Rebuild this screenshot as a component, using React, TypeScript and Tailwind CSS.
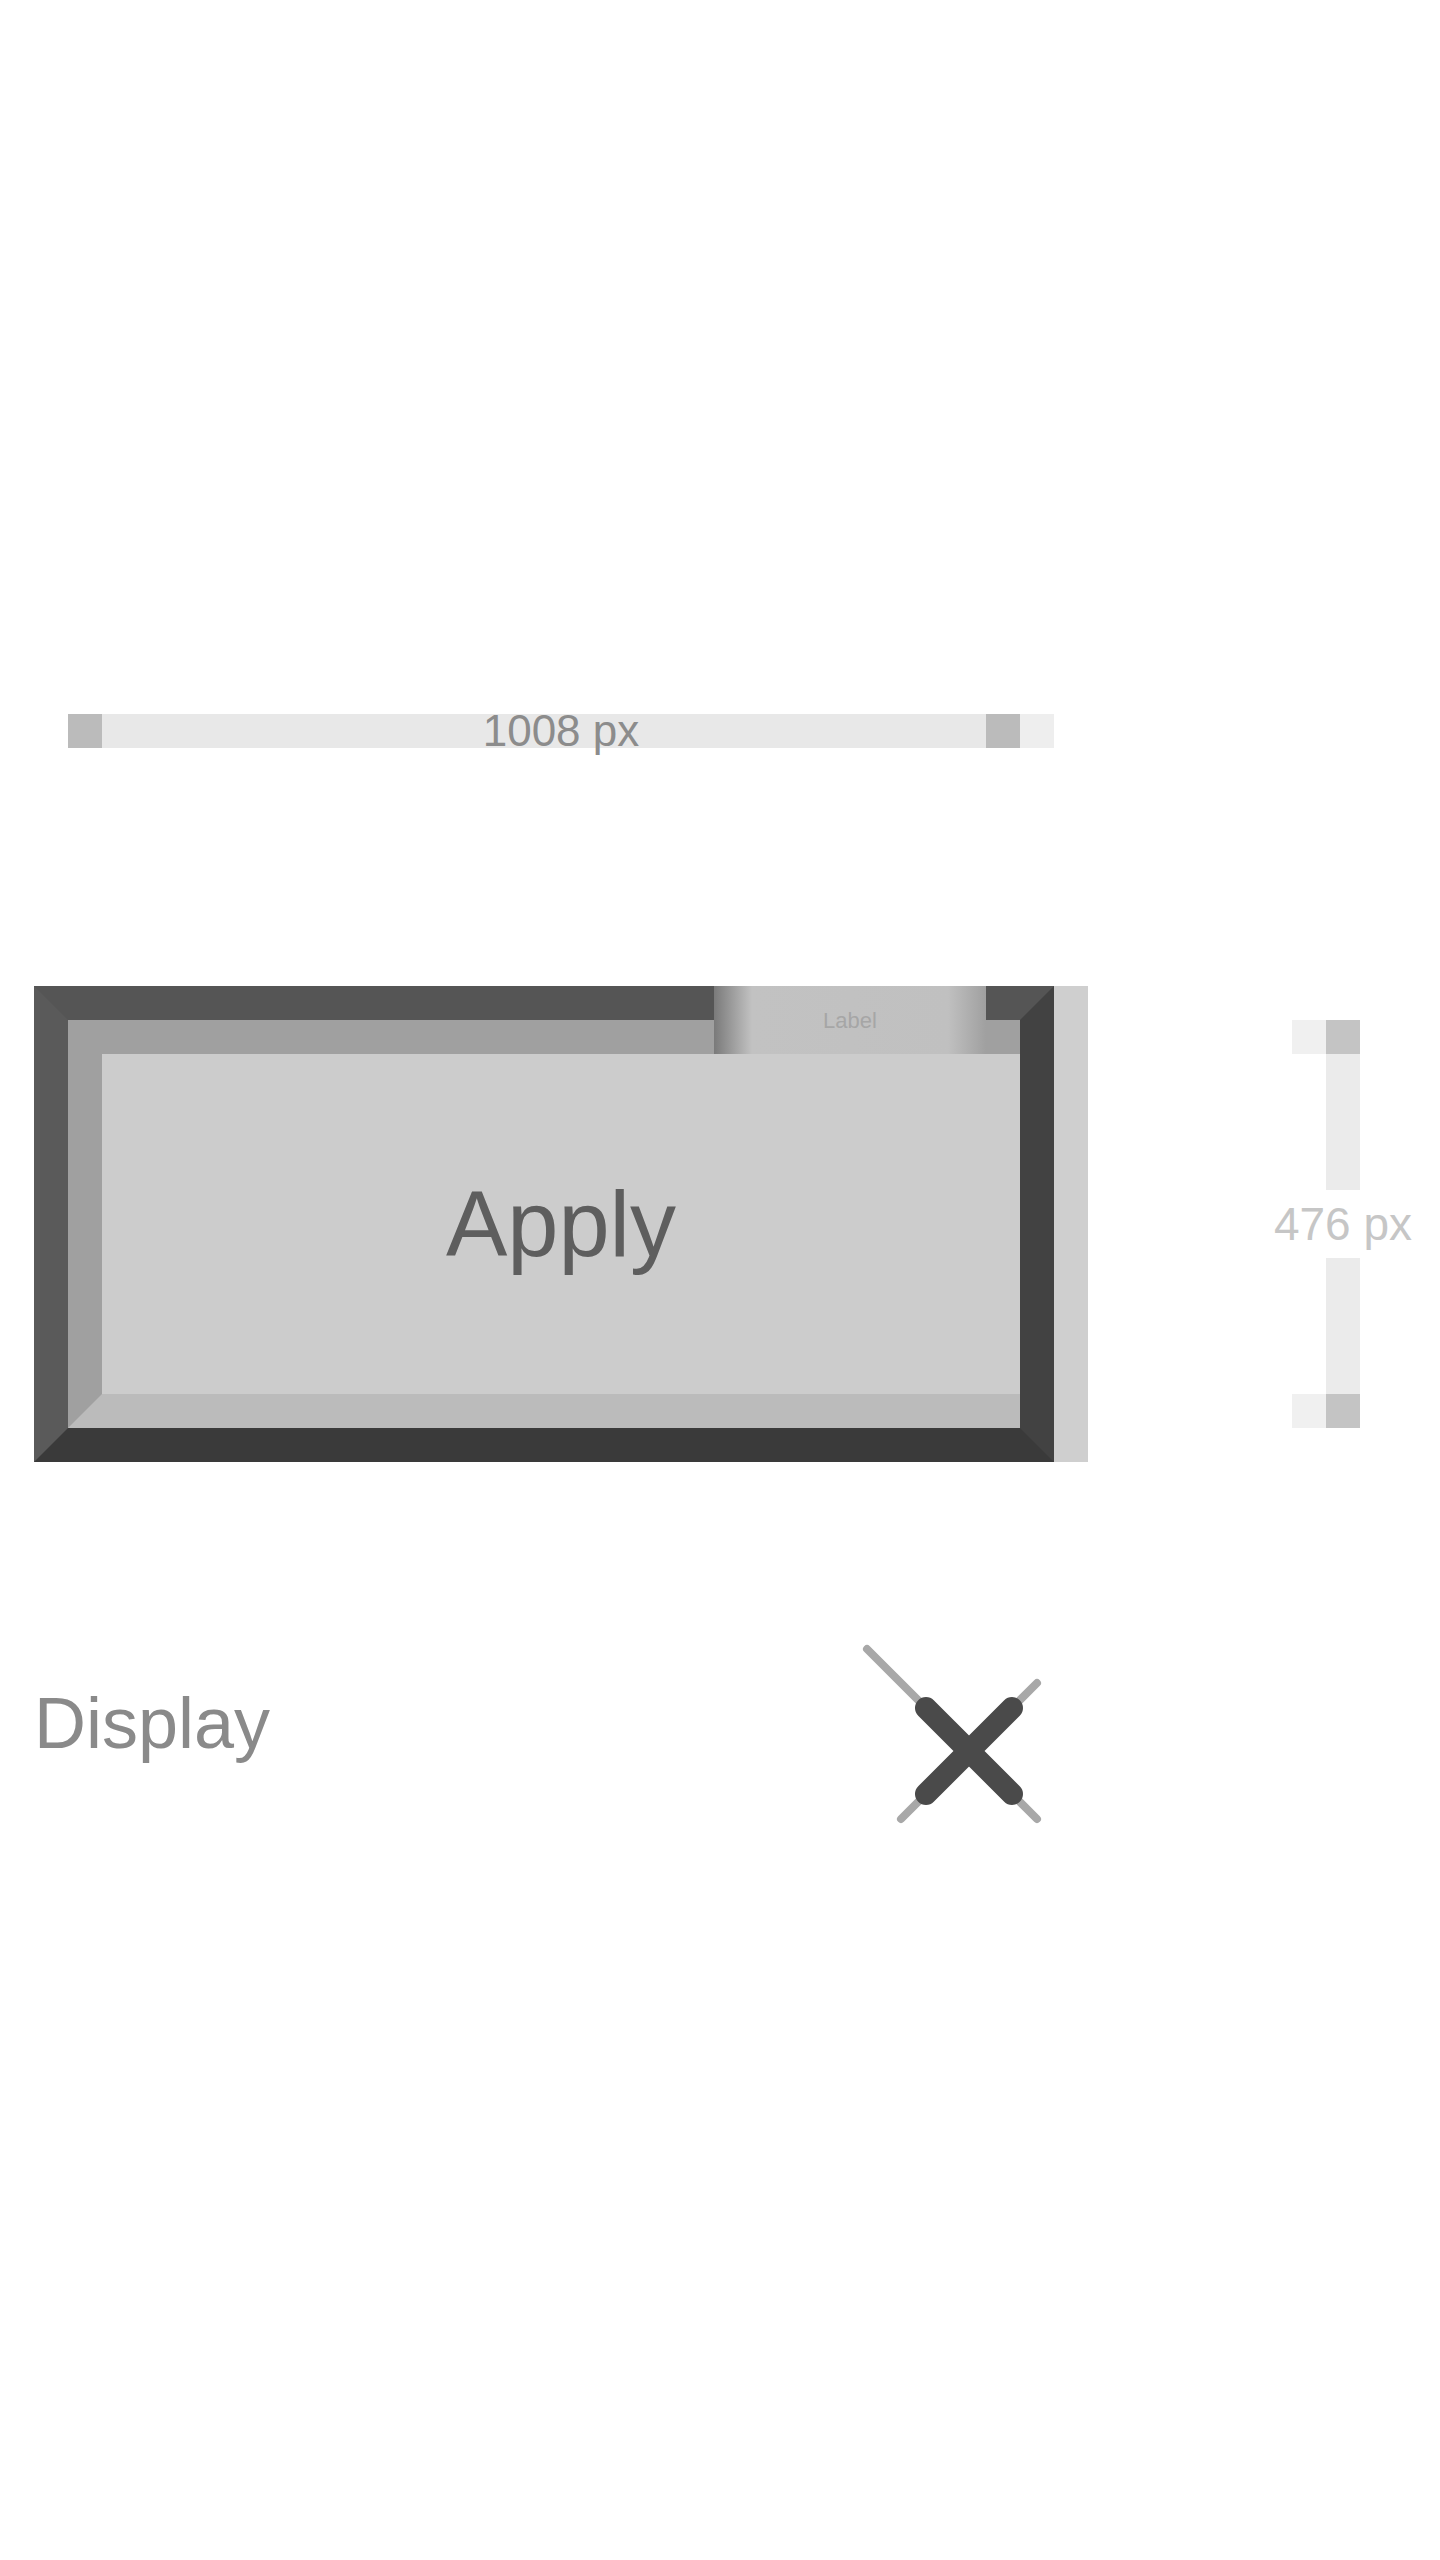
// Sizing sketch: a bevelled field with width / height rulers
function WidthRuler() {
  return (
    <div className="ml-[68px] flex h-[34px] w-[986px]">
      <span className="w-[34px] bg-[#bbbbbb]" />
      <span className="w-[374px] bg-[#e8e8e8]" />
      <span className="w-[170px] whitespace-nowrap bg-[#e8e8e8] text-center text-[44px] leading-[34px] text-[#8c8c8c]">
        1008 px
      </span>
      <span className="flex-1 bg-[#e8e8e8]" />
      <span className="w-[34px] bg-[#bbbbbb]" />
      <span className="w-[34px] bg-[#eeeeee]" />
    </div>
  )
}

function Tick() {
  return (
    <span className="mr-[34px] flex h-[34px] w-[68px]">
      <span className="w-[34px] bg-[#f0f0f0]" />
      <span className="w-[34px] bg-[#c4c4c4]" />
    </span>
  )
}

function HeightRuler() {
  return (
    <div className="ml-[204px] mt-[34px] flex h-[408px] w-[170px] flex-col items-center">
      <Tick />
      <span className="w-[34px] flex-1 bg-[#ebebeb]" />
      <span className="h-[68px] whitespace-nowrap text-[46px] leading-[68px] text-[#c6c6c6]">476 px</span>
      <span className="w-[34px] flex-1 bg-[#ebebeb]" />
      <Tick />
    </div>
  )
}

function FieldBox() {
  return (
    <div className="relative ml-[34px] h-[476px] w-[1020px] border-[34px] border-t-[#555555] border-l-[#5a5a5a] border-r-[#424242] border-b-[#3a3a3a] shadow-[34px_0_0_0_#cfcfcf]">
      {/* label notch sitting on the top edge */}
      <span className="absolute left-[646px] top-[-34px] flex h-[68px] w-[272px] items-center justify-center bg-[linear-gradient(to_right,#7a7a7a,#c2c2c2_14%,#c0c0c0_86%,#a0a0a0)] text-[22px] text-[#a6a6a6]">
        Label
      </span>
      <div className="flex h-full items-center justify-center border-t-[34px] border-l-[34px] border-b-[34px] border-t-[#a0a0a0] border-l-[#a0a0a0] border-b-[#bbbbbb] bg-[#cccccc]">
        <span className="text-[92px] leading-none text-[#5e5e5e]">Apply</span>
      </div>
    </div>
  )
}

function CloseMark() {
  return (
    <svg width="204" height="204" viewBox="0 0 204 204" fill="none" aria-label="close">
      <path d="M17 17L187 187M187 51L51 187" stroke="#a8a8a8" strokeWidth="8" strokeLinecap="round" />
      <path d="M76 76L162 162M162 76L76 162" stroke="#4a4a4a" strokeWidth="22" strokeLinecap="round" />
    </svg>
  )
}

export default function App() {
  return (
    <div className="h-[2560px] w-[1440px] bg-white pt-[714px] font-['Liberation_Sans',Arial,sans-serif]">
      <WidthRuler />

      <div className="mt-[238px] flex items-start">
        <FieldBox />
        <HeightRuler />
      </div>

      <div className="mt-[170px] flex items-start pl-[34px]">
        <div className="w-[816px] pt-[55px] text-[72px] leading-[72px] text-[#8a8a8a]">Display</div>
        <CloseMark />
      </div>
    </div>
  )
}
